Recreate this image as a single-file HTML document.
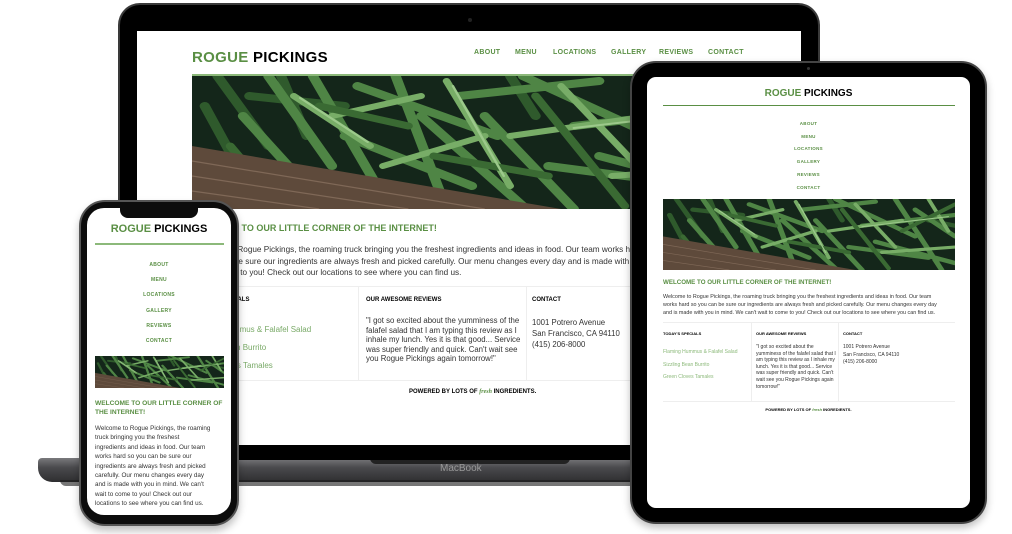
<!DOCTYPE html>
<html><head><meta charset="utf-8"><style>
*{margin:0;padding:0;box-sizing:border-box}
body{width:1012px;height:534px;background:#fff;position:relative;overflow:hidden;font-family:"Liberation Sans",sans-serif}
.a{position:absolute}
.g{color:#5a8f44}
.t{white-space:nowrap}
.nav{font-weight:bold;color:#5a8f44;letter-spacing:.3px}
</style></head><body>

<svg width="0" height="0" style="position:absolute">
  <defs>
    <g id="beans">
      <rect width="440" height="133" fill="#14261a"/>
      <g stroke-linecap="round" fill="none">
        <path d="M20 0 L60 70 M45 20 L120 30 M70 0 L90 60 M250 0 L270 40 M400 40 L440 50 M10 30 L40 100" stroke="#2f5a2c" stroke-width="8"/>
        <path d="M60 0 L110 90 M95 0 L150 120 M130 10 L240 60 M160 0 L200 133 M210 20 L320 5 M230 40 L300 133 M260 0 L380 70 M300 50 L440 30 M320 80 L440 120 M350 0 L420 133 M280 90 L400 110 M180 40 L260 130 M120 60 L220 110 M380 20 L440 70 M40 40 L90 110" stroke="#4f8545" stroke-width="8"/>
        <path d="M80 20 L140 70 M200 5 L250 110 M250 60 L360 40 M330 100 L440 90 M150 90 L230 60 M400 0 L430 60 M290 10 L350 90 M110 40 L180 20" stroke="#78ad67" stroke-width="6"/>
        <path d="M30 70 L70 130 M100 30 L170 50 M270 20 L340 130 M360 60 L440 10 M190 80 L280 100" stroke="#3a6a33" stroke-width="7"/>
        <path d="M85 22 L138 66 M205 10 L245 100 M300 52 L430 33" stroke="#9cc98b" stroke-width="2"/>
      </g>
      <path d="M0 70 L290 133 L0 133 Z" fill="#5e4a3b"/>
      <path d="M0 85 L230 133 M0 100 L170 133 M0 115 L100 133" stroke="#7f6857" stroke-width="1.2"/>
    </g>
  </defs>
</svg>

<!-- Laptop base -->
<div class="a" style="left:38px;top:458px;width:880px;height:24px;border-radius:4px 4px 14px 14px;background:linear-gradient(#7a7a7d,#4a4a4d 40%,#2e2e30)"></div>
<div class="a" style="left:370px;top:458px;width:200px;height:6px;border-radius:0 0 8px 8px;background:#222"></div>
<div class="a" style="left:60px;top:480px;width:840px;height:6px;border-radius:0 0 40px 40px;background:#1a1a1a;opacity:.6"></div>
<div class="a t" style="left:440px;top:463px;font-size:10px;color:#999">MacBook</div>

<!-- Laptop lid -->
<div class="a" style="left:118px;top:3px;width:702px;height:457px;background:#000;border-radius:22px 22px 0 0;border:2px solid #3a3a3a;border-bottom:none"></div>
<div class="a" style="left:468px;top:18px;width:4px;height:4px;border-radius:50%;background:#222"></div>
<div class="a" style="left:137px;top:31px;width:664px;height:414px;background:#fff;overflow:hidden">
  <div class="a t" style="left:55px;top:18px;font-size:15px;font-weight:bold;letter-spacing:.3px"><span class="g">ROGUE</span> PICKINGS</div>
  <div class="a t nav" style="left:337px;top:18px;font-size:7px">ABOUT</div>
  <div class="a t nav" style="left:378px;top:18px;font-size:7px">MENU</div>
  <div class="a t nav" style="left:416px;top:18px;font-size:7px">LOCATIONS</div>
  <div class="a t nav" style="left:474px;top:18px;font-size:7px">GALLERY</div>
  <div class="a t nav" style="left:522px;top:18px;font-size:7px">REVIEWS</div>
  <div class="a t nav" style="left:571px;top:18px;font-size:7px">CONTACT</div>
  <div class="a" style="left:55px;top:43px;width:560px;height:2px;background:#8cb97a"></div>
  <svg class="a" style="left:55px;top:45px" width="560" height="133" viewBox="0 0 440 133" preserveAspectRatio="none"><use href="#beans"/></svg>
  <div class="a t g" style="left:55px;top:192px;font-size:9px;font-weight:bold">WELCOME TO OUR LITTLE CORNER OF THE INTERNET!</div>
  <div class="a" style="left:55px;top:213px;width:450px;font-size:8.2px;line-height:11.5px;color:#333;white-space:nowrap">Welcome to Rogue Pickings, the roaming truck bringing you the freshest ingredients and ideas in food. Our team works hard<br>so you can be sure our ingredients are always fresh and picked carefully. Our menu changes every day and is made with you in mind. We can't<br>wait to come to you! Check out our locations to see where you can find us.</div>
  <div class="a" style="left:55px;top:255px;width:560px;height:1px;background:#eee"></div>
  <div class="a" style="left:221px;top:256px;width:1px;height:94px;background:#eee"></div>
  <div class="a" style="left:389px;top:256px;width:1px;height:94px;background:#eee"></div>
  <div class="a t" style="left:55px;top:266px;font-size:6px;font-weight:bold">TODAY'S SPECIALS</div>
  <div class="a t" style="left:229px;top:266px;font-size:6px;font-weight:bold">OUR AWESOME REVIEWS</div>
  <div class="a t" style="left:395px;top:266px;font-size:6px;font-weight:bold">CONTACT</div>
  <div class="a t" style="left:55px;top:290px;font-size:8px;line-height:18px;color:#7aaa68">Flaming Hummus &amp; Falafel Salad<br>Sizzling Bean Burrito<br>Green Cloves Tamales</div>
  <div class="a" style="left:229px;top:285px;width:160px;font-size:7.8px;line-height:9.6px;color:#333">"I got so excited about the yumminess of the falafel salad that I am typing this review as I inhale my lunch. Yes it is that good... Service was super friendly and quick. Can't wait see you Rogue Pickings again tomorrow!"</div>
  <div class="a t" style="left:395px;top:286px;font-size:7.8px;line-height:11px;color:#333">1001 Potrero Avenue<br>San Francisco, CA 94110<br>(415) 206-8000</div>
  <div class="a" style="left:55px;top:349px;width:560px;height:1px;background:#eee"></div>
  <div class="a t" style="left:272px;top:358px;font-size:6px;font-weight:bold">POWERED BY LOTS OF <i class="g" style="font-family:'Liberation Serif',serif">fresh</i> INGREDIENTS.</div>
</div>

<!-- Tablet -->
<div class="a" style="left:630px;top:61px;width:357px;height:463px;background:#000;border-radius:26px;border:2px solid #444;box-shadow:0 4px 8px rgba(0,0,0,.25)"></div>
<div class="a" style="left:807px;top:67px;width:3px;height:3px;border-radius:50%;background:#333"></div>
<div class="a" style="left:647px;top:77px;width:323px;height:431px;background:#fff;border-radius:9px;overflow:hidden">
  <div class="a t" style="left:0;width:323px;text-align:center;top:11px;font-size:10px;font-weight:bold"><span class="g">ROGUE</span> PICKINGS</div>
  <div class="a" style="left:16px;top:28px;width:292px;height:1px;background:#5a8f44"></div>
  <div class="a nav" style="left:0;width:323px;text-align:center;top:41px;font-size:4.5px;line-height:12.7px">ABOUT<br>MENU<br>LOCATIONS<br>GALLERY<br>REVIEWS<br>CONTACT</div>
  <svg class="a" style="left:16px;top:122px" width="292" height="71" viewBox="0 0 440 133" preserveAspectRatio="none"><use href="#beans"/></svg>
  <div class="a t g" style="left:16px;top:202px;font-size:6.2px;font-weight:bold">WELCOME TO OUR LITTLE CORNER OF THE INTERNET!</div>
  <div class="a" style="left:16px;top:216px;width:295px;font-size:5.4px;line-height:8px;color:#333;white-space:nowrap">Welcome to Rogue Pickings, the roaming truck bringing you the freshest ingredients and ideas in food. Our team<br>works hard so you can be sure our ingredients are always fresh and picked carefully. Our menu changes every day<br>and is made with you in mind. We can't wait to come to you! Check out our locations to see where you can find us.</div>
  <div class="a" style="left:16px;top:245px;width:292px;height:1px;background:#eee"></div>
  <div class="a" style="left:104px;top:246px;width:1px;height:78px;background:#eee"></div>
  <div class="a" style="left:191px;top:246px;width:1px;height:78px;background:#eee"></div>
  <div class="a t" style="left:16px;top:254px;font-size:4px;font-weight:bold">TODAY'S SPECIALS</div>
  <div class="a t" style="left:109px;top:254px;font-size:4px;font-weight:bold">OUR AWESOME REVIEWS</div>
  <div class="a t" style="left:196px;top:254px;font-size:4px;font-weight:bold">CONTACT</div>
  <div class="a t" style="left:16px;top:269px;font-size:5px;line-height:12.5px;color:#8cb97a">Flaming Hummus &amp; Falafel Salad<br>Sizzling Bean Burrito<br>Green Cloves Tamales</div>
  <div class="a" style="left:109px;top:267px;width:82px;font-size:5px;line-height:6.6px;color:#333">"I got so excited about the yumminess of the falafel salad that I am typing this review as I inhale my lunch. Yes it is that good... Service was super friendly and quick. Can't wait see you Rogue Pickings again tomorrow!"</div>
  <div class="a t" style="left:196px;top:267px;font-size:5px;line-height:7.7px;color:#333">1001 Potrero Avenue<br>San Francisco, CA 94110<br>(415) 206-8000</div>
  <div class="a" style="left:16px;top:324px;width:292px;height:1px;background:#eee"></div>
  <div class="a t" style="left:0;width:323px;text-align:center;top:330px;font-size:4px;font-weight:bold">POWERED BY LOTS OF <i class="g">fresh</i> INGREDIENTS.</div>
</div>

<!-- Phone -->
<div class="a" style="left:79px;top:200px;width:160px;height:326px;background:#0c0c0c;border-radius:26px;border:2px solid #555;box-shadow:0 5px 8px rgba(0,0,0,.25)"></div>
<div class="a" style="left:87px;top:208px;width:144px;height:307px;background:#fff;border-radius:17px;overflow:hidden">
  <div class="a" style="left:33px;top:-2px;width:78px;height:12px;background:#0c0c0c;border-radius:0 0 8px 8px"></div>
  <div class="a t" style="left:0;width:144px;text-align:center;top:15px;font-size:11px;font-weight:bold"><span class="g">ROGUE</span> PICKINGS</div>
  <div class="a" style="left:8px;top:35px;width:129px;height:2px;background:#8cb97a"></div>
  <div class="a nav" style="left:0;width:144px;text-align:center;top:50px;font-size:5px;line-height:15.2px">ABOUT<br>MENU<br>LOCATIONS<br>GALLERY<br>REVIEWS<br>CONTACT</div>
  <svg class="a" style="left:8px;top:148px" width="129" height="32" viewBox="0 0 440 133" preserveAspectRatio="none"><use href="#beans"/></svg>
  <div class="a g" style="left:8px;top:191px;width:132px;font-size:6.6px;line-height:9px;font-weight:bold">WELCOME TO OUR LITTLE CORNER OF THE INTERNET!</div>
  <div class="a" style="left:8px;top:216px;width:132px;font-size:6.3px;line-height:9.4px;color:#333;white-space:nowrap">Welcome to Rogue Pickings, the roaming<br>truck bringing you the freshest<br>ingredients and ideas in food. Our team<br>works hard so you can be sure our<br>ingredients are always fresh and picked<br>carefully. Our menu changes every day<br>and is made with you in mind. We can't<br>wait to come to you! Check out our<br>locations to see where you can find us.</div>
</div>
</body></html>
